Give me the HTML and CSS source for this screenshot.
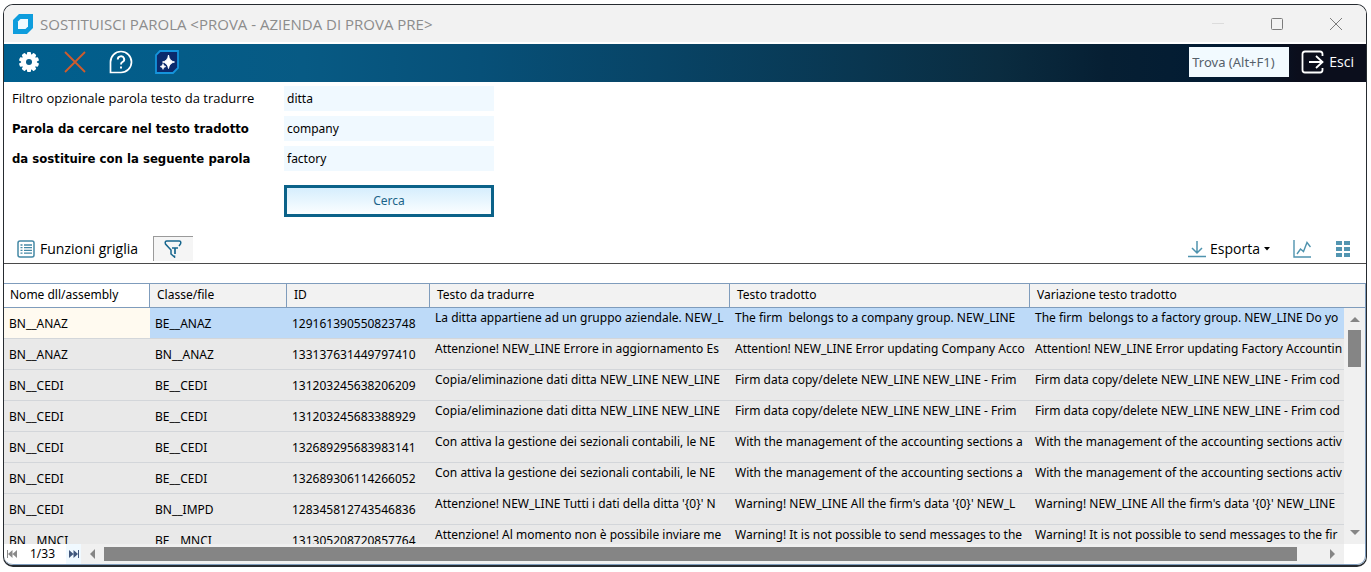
FILE: index.html
```html
<!DOCTYPE html>
<html lang="it">
<head>
<meta charset="utf-8">
<title>Sostituisci parola</title>
<link rel="stylesheet" href="styles.css">
</head>
<body>
<main class="window">
  <header class="titlebar">
    <svg class="app-logo" viewBox="0 0 20 20"><path d="M6 0H20V14L14 20H0V6Z" fill="#0e9ddd"/><path d="M7.500 5H15V12.500L12.500 15H5V7.500Z" fill="#f2fbff"/></svg>
    <h1 class="title">SOSTITUISCI PAROLA &lt;PROVA - AZIENDA DI PROVA PRE&gt;</h1>
    <div class="win-controls">
      <button class="win-button" aria-label="Riduci"><svg viewBox="0 0 14 14"><path d="M1 6.500H13" stroke="#dcdcdc"/></svg></button>
      <button class="win-button" aria-label="Ingrandisci"><svg viewBox="0 0 14 14"><rect x="1.500" y="1.500" width="11" height="11" rx="1" stroke="#7c7c7c" fill="none"/></svg></button>
      <button class="win-button" aria-label="Chiudi"><svg viewBox="0 0 14 14"><path d="M1 1L13 13M13 1L1 13" stroke="#7c7c7c"/></svg></button>
    </div>
  </header>

  <nav class="toolbar">
    <button class="tool" aria-label="Impostazioni"><svg viewBox="0 0 24 24"><g fill="#fff"><circle cx="12" cy="12" r="8"/><rect x="10" y="2" width="4" height="20" rx="1"/><rect x="10" y="2" width="4" height="20" rx="1" transform="rotate(36 12 12)"/><rect x="10" y="2" width="4" height="20" rx="1" transform="rotate(72 12 12)"/><rect x="10" y="2" width="4" height="20" rx="1" transform="rotate(108 12 12)"/><rect x="10" y="2" width="4" height="20" rx="1" transform="rotate(144 12 12)"/></g><circle cx="12" cy="12" r="3" fill="#075d8b"/></svg></button>
    <button class="tool" aria-label="Annulla"><svg viewBox="0 0 24 24"><path d="M2 2L22 22M22 2L2 22" stroke="#d05c2c" stroke-width="1.800"/></svg></button>
    <button class="tool" aria-label="Aiuto"><svg viewBox="0 0 24 24" fill="none" stroke="#fff" stroke-width="1.700"><path d="M1.500 22.500V12A10.500 10.500 0 1 1 12 22.500Z"/><path d="M8.800 9.500A3.200 3 0 1 1 13.400 12Q12 12.800 12 14.500" stroke-width="1.900"/><path d="M12 16.400V18.400" stroke-width="2"/></svg></button>
    <button class="tool" aria-label="Assistente"><svg viewBox="0 0 24 24"><path d="M5 1H23V18L18 23H1V5Z" fill="#0b2a6c" stroke="#1594dc" stroke-width="1.800"/><path d="M13.500 5Q14.300 11 19.500 12Q14.300 13 13.500 18.500Q12.700 13 7.500 12Q12.700 11 13.500 5Z" fill="#fff" stroke="#fff" stroke-width=".9"/><path d="M8 13.500Q8.500 16 11 16.500Q8.500 17 8 19.500Q7.500 17 5 16.500Q7.500 16 8 13.500Z" fill="#fff" stroke="#fff" stroke-width=".5"/></svg></button>
    <input class="search" type="text" placeholder="Trova (Alt+F1)" aria-label="Trova">
    <button class="exit"><svg viewBox="0 0 24 24" fill="none" stroke="#fff" stroke-width="1.800"><path d="M21.500 6V4Q21.500 1.500 19 1.500H4Q1.500 1.500 1.500 4V20Q1.500 22.500 4 22.500H19Q21.500 22.500 21.500 20V18"/><path d="M8 12H21M15 6L21.500 12L15 18"/></svg>Esci</button>
  </nav>

  <form class="filters">
    <label class="label" for="filter">Filtro opzionale parola testo da tradurre</label>
    <input class="field" id="filter" type="text" value="ditta">
    <label class="label strong" for="find">Parola da cercare nel testo tradotto</label>
    <input class="field" id="find" type="text" value="company">
    <label class="label strong" for="replace">da sostituire con la seguente parola</label>
    <input class="field" id="replace" type="text" value="factory">
    <button class="submit" type="button">Cerca</button>
  </form>

  <div class="grid-tools">
    <button class="grid-tool"><svg class="icon" viewBox="0 0 18 18" fill="none" stroke="#4388a5"><rect x="1" y="1" width="16" height="16" rx="2" stroke-width="1.500"/><path d="M3.500 5H5.500M3.500 7.700H5.500M3.500 10.400H5.500M3.500 13.100H5.500M7 5H15M7 7.700H15M7 10.400H15M7 13.100H15" stroke-width="1.300"/></svg>Funzioni griglia</button>
    <button class="grid-tool toggle" aria-pressed="true" aria-label="Filtro"><svg class="icon" viewBox="0 0 18 18" fill="none" stroke="#17668d" stroke-width="1.500"><path d="M15 6L16.500 4Q17.500 1 15 1H3Q0.500 1 1.500 4L7 10V14L10.500 17V15.500"/><path d="M8 8H14M11 8V14" stroke-width="1.700"/></svg></button>
    <button class="grid-tool export"><svg class="icon" viewBox="0 0 18 18" fill="none" stroke="#4f93ae" stroke-width="1.500"><path d="M9 1V13M4 8L9 13L14 8M0 16.500H18"/></svg>Esporta<svg class="caret" viewBox="0 0 6 4"><path d="M0 0H6L3 3.500Z" fill="#000"/></svg></button>
    <button class="grid-tool" aria-label="Grafico"><svg class="icon" viewBox="0 0 18 18" fill="none" stroke="#4f93ae" stroke-width="1.400"><path d="M1 0V17H18M4 14L7.500 9L10.500 11.500L14 2.500L17.500 7"/></svg></button>
    <button class="grid-tool" aria-label="Vista"><svg class="icon" viewBox="0 0 18 18" fill="#5295b1"><path d="M2 1H8V5H2ZM10 1H16V5H10ZM2 7H8V11H2ZM10 7H16V11H10ZM2 13H8V17H2ZM10 13H16V17H10Z"/></svg></button>
  </div>

  <section class="grid">
    <div class="viewport">
      <table class="table">
        <colgroup><col class="c-name"><col class="c-class"><col class="c-id"><col class="c-text"><col class="c-text"><col></colgroup>
        <thead><tr><th class="sorted">Nome dll/assembly</th><th>Classe/file</th><th>ID</th><th>Testo da tradurre</th><th>Testo tradotto</th><th>Variazione testo tradotto</th></tr></thead>
        <tbody>
          <tr class="selected"><td class="current">BN__ANAZ</td><td>BE__ANAZ</td><td>129161390550823748</td><td class="memo">La ditta appartiene ad un gruppo aziendale. NEW_L</td><td class="memo">The firm&nbsp; belongs to a company group. NEW_LINE</td><td class="memo">The firm&nbsp; belongs to a factory group. NEW_LINE Do yo</td></tr>
          <tr><td>BN__ANAZ</td><td>BN__ANAZ</td><td>133137631449797410</td><td class="memo">Attenzione! NEW_LINE Errore in aggiornamento Es</td><td class="memo">Attention! NEW_LINE Error updating Company Acco</td><td class="memo">Attention! NEW_LINE Error updating Factory Accountin</td></tr>
          <tr><td>BN__CEDI</td><td>BE__CEDI</td><td>131203245638206209</td><td class="memo">Copia/eliminazione dati ditta NEW_LINE NEW_LINE</td><td class="memo">Firm data copy/delete NEW_LINE NEW_LINE - Frim</td><td class="memo">Firm data copy/delete NEW_LINE NEW_LINE - Frim cod</td></tr>
          <tr><td>BN__CEDI</td><td>BE__CEDI</td><td>131203245683388929</td><td class="memo">Copia/eliminazione dati ditta NEW_LINE NEW_LINE</td><td class="memo">Firm data copy/delete NEW_LINE NEW_LINE - Frim</td><td class="memo">Firm data copy/delete NEW_LINE NEW_LINE - Frim cod</td></tr>
          <tr><td>BN__CEDI</td><td>BE__CEDI</td><td>132689295683983141</td><td class="memo">Con attiva la gestione dei sezionali contabili, le NE</td><td class="memo">With the management of the accounting sections a</td><td class="memo">With the management of the accounting sections activ</td></tr>
          <tr><td>BN__CEDI</td><td>BE__CEDI</td><td>132689306114266052</td><td class="memo">Con attiva la gestione dei sezionali contabili, le NE</td><td class="memo">With the management of the accounting sections a</td><td class="memo">With the management of the accounting sections activ</td></tr>
          <tr><td>BN__CEDI</td><td>BN__IMPD</td><td>128345812743546836</td><td class="memo">Attenzione! NEW_LINE Tutti i dati della ditta '{0}' N</td><td class="memo">Warning! NEW_LINE All the firm's data '{0}' NEW_L</td><td class="memo">Warning! NEW_LINE All the firm's data '{0}' NEW_LINE</td></tr>
          <tr><td>BN__MNCI</td><td>BE__MNCI</td><td>131305208720857764</td><td class="memo">Attenzione! Al momento non è possibile inviare me</td><td class="memo">Warning! It is not possible to send messages to the</td><td class="memo">Warning! It is not possible to send messages to the fir</td></tr>
        </tbody>
      </table>
      <div class="vscroll">
        <svg class="arrow" viewBox="0 0 10 10"><path d="M0 8L5 3L10 8Z"/></svg>
        <div class="vthumb"></div>
        <svg class="arrow" viewBox="0 0 10 10"><path d="M0 2L5 7L10 2Z"/></svg>
      </div>
    </div>
    <footer class="pager">
      <button class="page-button" aria-label="Primo"><svg viewBox="0 0 10 8" fill="#8a8a8a"><path d="M0 0H1V8H0ZM5.500 0V8L1 4ZM10 0V8L5.500 4Z"/></svg></button>
      <span class="page">1/33</span>
      <button class="page-button next" aria-label="Ultimo"><svg viewBox="0 0 10 8" fill="#40577c"><path d="M10 0H9V8H10ZM4.500 0V8L9 4ZM0 0V8L4.500 4Z"/></svg></button>
      <div class="hscroll">
        <svg class="arrow" viewBox="0 0 10 10"><path d="M8 0L3 5L8 10Z"/></svg>
        <div class="htrack"><div class="hthumb"></div></div>
        <svg class="arrow" viewBox="0 0 10 10"><path d="M2 0L7 5L2 10Z"/></svg>
      </div>
    </footer>
  </section>
</main>
</body>
</html>
```
FILE: styles.css
```css
* { box-sizing: border-box; }
body {
  margin: 0;
  height: 100vh;
  padding: 4px 4px 5px 3px;
  background: #fff;
  color: #000;
  font: 12px/16px "Noto Sans", "DejaVu Sans Condensed", sans-serif;
}
button { border: 0; padding: 0; background: none; color: inherit; font: inherit; }
svg { display: block; flex: none; }

.window {
  display: flex;
  flex-direction: column;
  height: 100%;
  overflow: hidden;
  border: 1px solid #262b30;
  border-bottom-width: 2px;
  border-radius: 10px;
}

.titlebar {
  display: flex;
  align-items: center;
  height: 39px;
  flex: none;
  padding-left: 9px;
  border-bottom: 2px solid #fff;
  background: #f2f2f2;
}
.app-logo { width: 20px; height: 20px; }
.title { margin: 0 0 0 7px; color: #8c8c8c; font: 15px/20px "Open Sans", sans-serif; }
.win-controls { display: flex; gap: 45px; margin-left: auto; padding-right: 23px; }
.win-button svg { width: 14px; height: 14px; }

.toolbar {
  display: flex;
  align-items: center;
  gap: 22px;
  height: 38px;
  flex: none;
  padding: 0 12px 2px 13px;
  background: linear-gradient(90deg, #005f8e, #075a84 22%, #075078 35%, #084466 48%, #093650 63%, #0a2c40 73%, #061f33 81%, #021b33 90%, #0b0e1c 95%);
  color: #fff;
}
.tool svg, .exit svg { width: 24px; height: 24px; }
.search {
  width: 100px;
  height: 30px;
  margin-left: auto;
  padding: 0 3px;
  border: 0;
  background: #f2faff;
  font: 13px/16px "Noto Sans", sans-serif;
}
.search::placeholder { color: #55606a; opacity: 1; }
.exit { display: flex; align-items: center; gap: 4px; margin-left: -10px; font: 14px/20px "Open Sans", sans-serif; }

.filters {
  display: grid;
  grid-template-columns: 272px 210px;
  row-gap: 5px;
  padding: 4px 8px 17px;
}
.label { font: 13px/25px "Open Sans", sans-serif; }
.strong { font: bold 13px/25px "DejaVu Sans Condensed", "Noto Sans", sans-serif; }
.field {
  height: 25px;
  padding: 0 3px;
  border: 0;
  background: #f0f9ff;
  color: #000;
  font: inherit;
}
.submit {
  grid-column: 2;
  height: 32px;
  margin-top: 9px;
  border: 3px solid #0b6289;
  background: linear-gradient(#d6eefd, #fbfeff);
  color: #1b6489;
}

.grid-tools {
  display: flex;
  align-items: center;
  gap: 23px;
  height: 30px;
  flex: none;
  padding: 0 14px 0 13px;
  border-bottom: 1px solid #4a4a4a;
}
.grid-tool { display: flex; align-items: center; gap: 5px; font: 14px/20px "Open Sans", sans-serif; }
.icon { width: 18px; height: 18px; }
.caret { width: 6px; height: 4px; }
.toggle {
  justify-content: center;
  width: 40px;
  height: 25px;
  margin-left: -8px;
  border-top: 1px solid #9a9a9a;
  border-left: 1px solid #9a9a9a;
  background: #f5f5f5;
}
.export { gap: 4px; margin-left: auto; }

.grid {
  display: flex;
  flex: 1;
  flex-direction: column;
  min-height: 0;
  margin-top: 19px;
  border: 1px solid #7f9cbc;
  border-radius: 0 0 9px 9px;
  border-left-width: 0;
}
.viewport { position: relative; flex: 1; min-height: 0; overflow: hidden; background: #e9e9e9; }
.table { width: 100%; border-collapse: separate; border-spacing: 0; table-layout: fixed; }
.c-name { width: 146px; }
.c-class { width: 137px; }
.c-id { width: 143px; }
.c-text { width: 300px; }
th {
  height: 24px;
  padding: 0 7px 2px;
  border-right: 1px solid #7f9cbc;
  border-bottom: 1px solid #7f9cbc;
  background: #f2f2f2;
  font-weight: normal;
  text-align: left;
}
th:last-child { border-right: 0; }
.sorted { padding-left: 6px; background: #fff; }
td {
  height: 31px;
  padding: 1px 0 0 5px;
  overflow: hidden;
  border-bottom: 1px solid #d3d6da;
  white-space: nowrap;
}
.memo { padding: 2px 0 0 5px; vertical-align: top; }
.selected td { background: #bddaf8; }
.selected .current { background: #fffaf0; }

.vscroll {
  position: absolute;
  top: 24px;
  right: 0;
  bottom: 0;
  display: flex;
  flex-direction: column;
  align-items: center;
  width: 21px;
  padding: 6px 0;
  background: #f0f0f0;
}
.arrow { width: 10px; height: 10px; fill: #858585; }
.vthumb { width: 13px; height: 37px; margin: 6px 0 auto; background: #858585; }

.pager { display: flex; align-items: stretch; height: 20px; flex: none; }
.page-button { width: 15px; padding-left: 3px; }
.page-button svg { width: 10px; height: 8px; }
.page { width: 47px; line-height: 20px; text-align: center; }
.next { background: #f0f9ff; }
.hscroll {
  display: flex;
  flex: 1;
  align-items: center;
  gap: 7px;
  margin-right: 21px;
  padding: 0 6px;
  background: #f0f0f0;
}
.htrack { flex: 1; }
.hthumb { width: 98%; height: 14px; background: #858585; }
```
